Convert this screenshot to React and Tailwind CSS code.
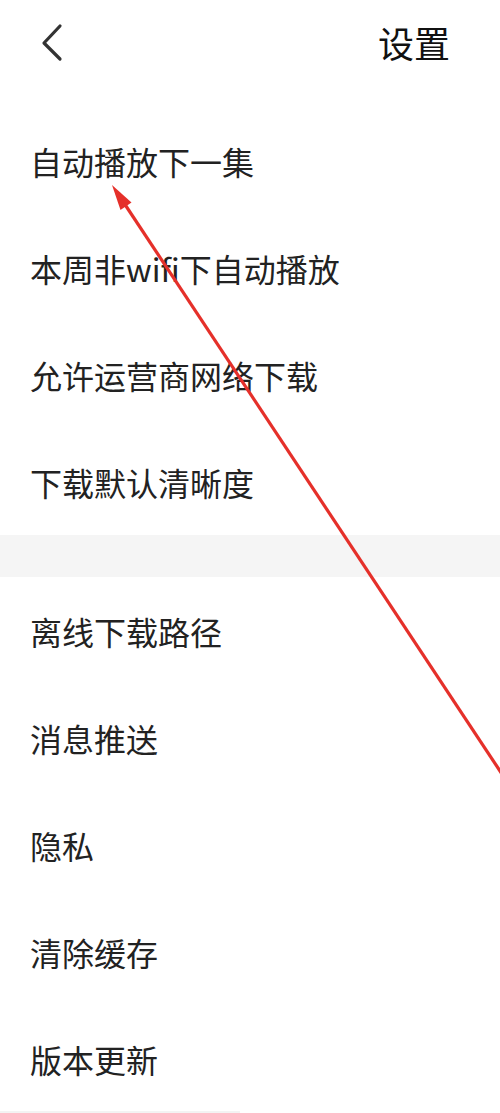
import React from 'react';

const groupA = ['自动播放下一集', '本周非wifi下自动播放', '允许运营商网络下载', '下载默认清晰度'];
const groupB = ['离线下载路径', '消息推送', '隐私', '清除缓存', '版本更新'];

const font = { fontFamily: '"Noto Sans CJK SC", "Noto Sans", sans-serif' };

function Row({ label }) {
  return (
    <div className="h-[107px] flex items-center pl-[30px] text-[32px] text-[#222] leading-none">
      {label}
    </div>
  );
}

export default function App() {
  return (
    <div className="relative w-[500px] h-[1113px] bg-white overflow-hidden" style={font}>
      <div className="h-[107px] flex items-start justify-between pt-[22px] pl-[40px] pr-[50px]">
        <svg width="26" height="40" viewBox="0 0 26 40" className="mt-[1px]">
          <path d="M20 3 L4 20 L20 36" fill="none" stroke="#333" strokeWidth="3.2" strokeLinecap="round" strokeLinejoin="round" />
        </svg>
        <div className="text-[36px] leading-[40px] text-[#111]">设置</div>
      </div>
      {groupA.map(t => <Row key={t} label={t} />)}
      <div className="h-[42px] bg-[#f5f5f5]" />
      {groupB.map(t => <Row key={t} label={t} />)}
      <div className="absolute left-0 bottom-0 w-[240px] h-[2px] bg-[#f3f3f3]" />

      <svg className="absolute inset-0 pointer-events-none" width="500" height="1113" viewBox="0 0 500 1113">
        <line x1="502" y1="774" x2="122" y2="200" stroke="#e5302a" strokeWidth="3.2" />
        <polygon points="112,185 120.5,210 131.5,202.5" fill="#e5302a" />
      </svg>
    </div>
  );
}
